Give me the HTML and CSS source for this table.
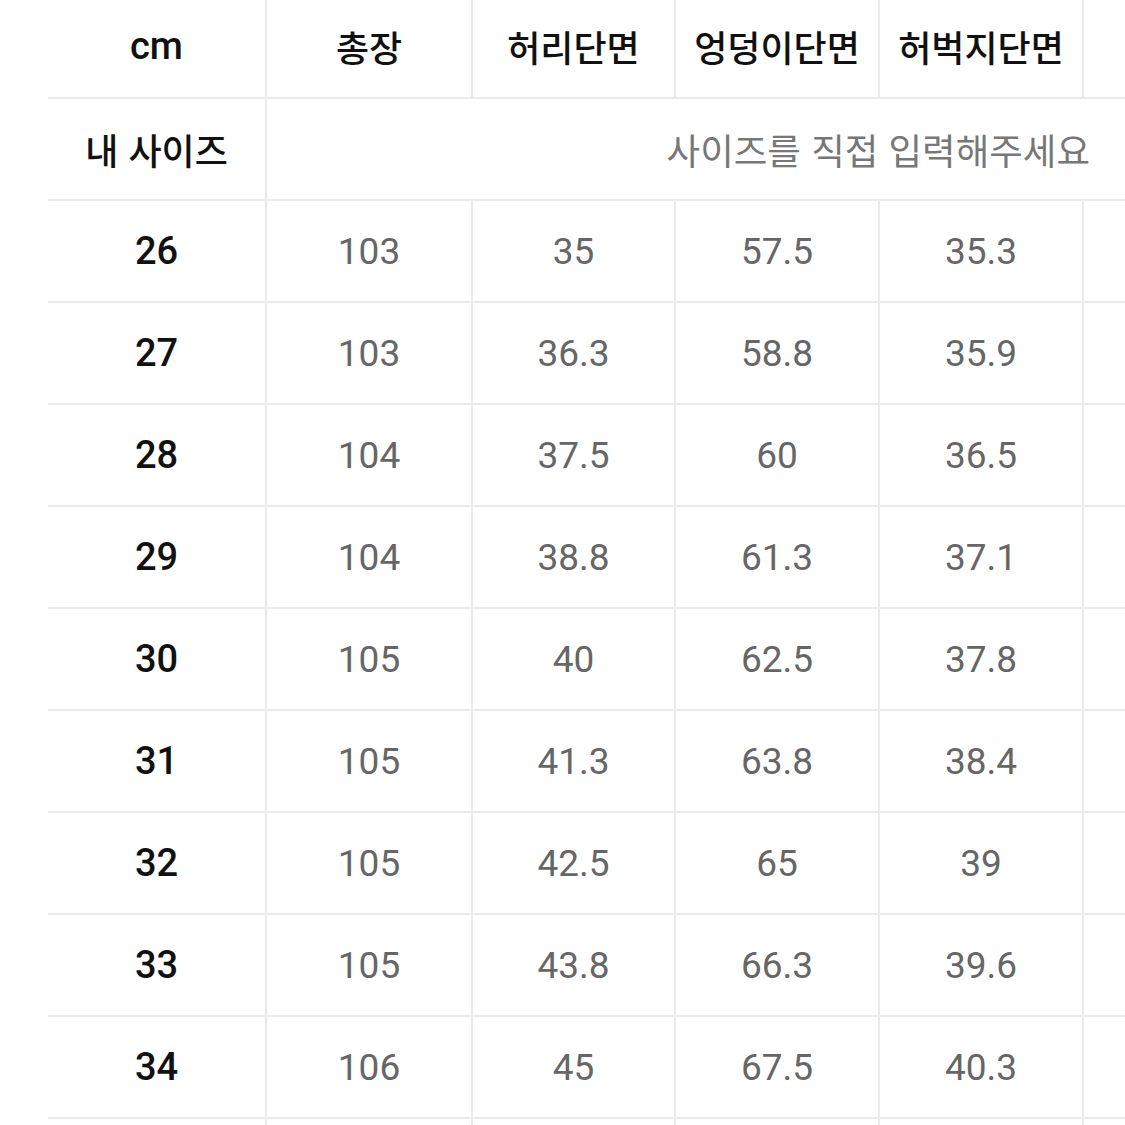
FILE: index.html
```html
<!DOCTYPE html>
<html lang="ko">
<head>
<meta charset="utf-8">
<title>사이즈표</title>
<link rel="stylesheet" href="styles.css">
</head>
<body>
<div class="sheet">
  <div class="grid">
    <div class="cell head latin">cm</div>
    <div class="cell head ko">총장</div>
    <div class="cell head ko">허리단면</div>
    <div class="cell head ko">엉덩이단면</div>
    <div class="cell head ko">허벅지단면</div>
    <div class="cell head ko"></div>

    <div class="cell ko key">내 사이즈</div>
    <div class="cell placeholder"><span class="ph-text">사이즈를 직접 입력해주세요</span></div>

    <div class="cell num key">26</div><div class="cell num">103</div><div class="cell num">35</div><div class="cell num">57.5</div><div class="cell num">35.3</div><div class="cell num"></div>
    <div class="cell num key">27</div><div class="cell num">103</div><div class="cell num">36.3</div><div class="cell num">58.8</div><div class="cell num">35.9</div><div class="cell num"></div>
    <div class="cell num key">28</div><div class="cell num">104</div><div class="cell num">37.5</div><div class="cell num">60</div><div class="cell num">36.5</div><div class="cell num"></div>
    <div class="cell num key">29</div><div class="cell num">104</div><div class="cell num">38.8</div><div class="cell num">61.3</div><div class="cell num">37.1</div><div class="cell num"></div>
    <div class="cell num key">30</div><div class="cell num">105</div><div class="cell num">40</div><div class="cell num">62.5</div><div class="cell num">37.8</div><div class="cell num"></div>
    <div class="cell num key">31</div><div class="cell num">105</div><div class="cell num">41.3</div><div class="cell num">63.8</div><div class="cell num">38.4</div><div class="cell num"></div>
    <div class="cell num key">32</div><div class="cell num">105</div><div class="cell num">42.5</div><div class="cell num">65</div><div class="cell num">39</div><div class="cell num"></div>
    <div class="cell num key">33</div><div class="cell num">105</div><div class="cell num">43.8</div><div class="cell num">66.3</div><div class="cell num">39.6</div><div class="cell num"></div>
    <div class="cell num key">34</div><div class="cell num">106</div><div class="cell num">45</div><div class="cell num">67.5</div><div class="cell num">40.3</div><div class="cell num"></div>
    <div class="cell num"></div><div class="cell num"></div><div class="cell num"></div><div class="cell num"></div><div class="cell num"></div><div class="cell num"></div>
  </div>
</div>
</body>
</html>
```

FILE: styles.css
```css
html, body {
  margin: 0;
  padding: 0;
  background: #ffffff;
  overflow: hidden;
}

.sheet {
  width: 1125px;
  height: 1125px;
  overflow: hidden;
  padding-left: 48px;
  box-sizing: border-box;
}

.grid {
  display: grid;
  grid-template-columns: 219px 206px 203px 204px 204px 204px;
  grid-template-rows: 99px;
  grid-auto-rows: 102px;
  width: max-content;
}

.cell {
  display: flex;
  align-items: center;
  justify-content: center;
  box-sizing: border-box;
  border-right: 2px solid #ebebeb;
  border-bottom: 2px solid #ebebeb;
  color: #666666;
  font-family: Roboto, "Noto Sans CJK KR", sans-serif;
  font-size: 37px;
  font-weight: 400;
}

.head {
  color: #111111;
  font-weight: 500;
  padding-bottom: 6px;
}

.latin {
  font-family: Roboto, "Noto Sans CJK KR", sans-serif;
  font-size: 38px;
}

.ko {
  font-family: "Noto Sans CJK KR", sans-serif;
  font-size: 36px;
  font-weight: 500;
  color: #111111;
}

.key {
  color: #111111;
  font-weight: 500;
}

.num.key {
  font-size: 38px;
}

.placeholder {
  grid-column: 2 / -1;
  border-right: none;
  justify-content: flex-end;
  padding-right: 198px;
}

.ph-text {
  font-family: "Noto Sans CJK KR", sans-serif;
  font-size: 36.5px;
  font-weight: 400;
  color: #777777;
}
```
